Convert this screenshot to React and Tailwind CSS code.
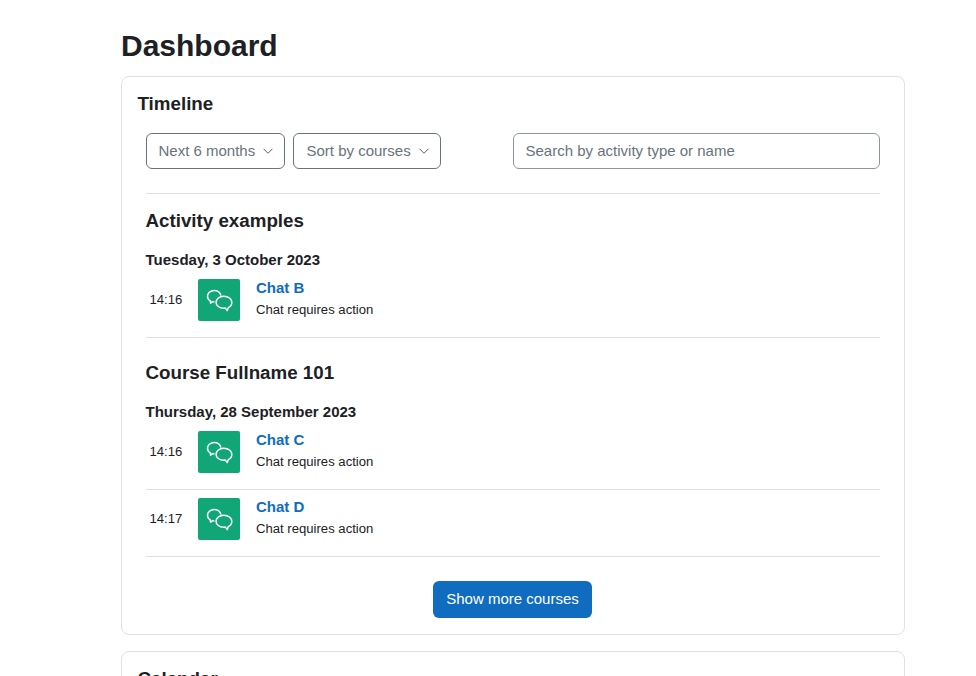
// Two overlapping speech bubbles, same as the chat activity icon
function ChatIcon() {
  return (
    <svg width="42" height="42" viewBox="0 0 42 42" fill="none" stroke="white" strokeWidth="1.5" strokeLinejoin="round">
      <path d="M23 16.6c-.9-3-3.6-5-6.9-5-3.7 0-6.6 2.6-6.6 5.7 0 2 1.1 3.7 2.8 4.7l.3 2.2 2-1.6c.6.2 1.2.3 1.9.3" />
      <path d="M25.8 17.2c4.5 0 8 2.8 8 6.2 0 2.3-1.4 4.2-3.6 5.3l-.9 2.9-2-2.5c-.5.1-1 .1-1.5.1-4.4 0-7.7-2.6-7.7-5.8 0-3.4 3.3-6.2 7.7-6.2z" />
    </svg>
  );
}

function SelectButton({ label, width, labelClass }) {
  return (
    <button className={`flex h-9 items-center justify-between rounded-md border border-[#6a737b] bg-white pl-3 pr-2 text-[15px] text-[#6a737b] ${width}`}>
      <span className={labelClass}>{label}</span>
      <svg width="16" height="12" viewBox="0 0 16 16" fill="none" stroke="#4b5258" strokeWidth="1.2" strokeLinecap="round" strokeLinejoin="round">
        <path d="M2.5 5.5l5.5 5.5 5.5-5.5" />
      </svg>
    </button>
  );
}

function EventRow({ time, name, border }) {
  return (
    <div className={`flex pb-4 ${border ? 'border-b border-[#dee2e6]' : ''}`}>
      <div className="flex w-[52px] items-center pl-1 text-[13.125px] text-[#1d2125]">
        <span className="-ml-[0.5px]">{time}</span>
      </div>
      <div className="flex h-[42px] w-[42px] items-center justify-center rounded-[2px] bg-[#11a676]">
        <ChatIcon />
      </div>
      <div className="ml-4 h-[42px]">
        <div className="-mt-[2px] text-[15px] leading-[22px] font-bold text-[#0f6cbf]">{name}</div>
        <div className="mt-[1px] text-[13.125px] leading-[20px] text-[#1d2125]">Chat requires action</div>
      </div>
    </div>
  );
}

export default function App() {
  return (
    <div className="h-[676px] overflow-hidden bg-white pl-[121px] font-['Liberation_Sans',sans-serif] text-[#1d2125]">
      <div className="w-[784px]">
        <h1 className="pt-[28px] pb-[12px] text-[30px] leading-[36px] font-bold">Dashboard</h1>

        <div className="rounded-lg border border-[#dee2e6] bg-white pb-4">
          <h2 className="pt-[15px] pl-[15.5px] text-[18.75px] leading-[23px] font-bold">Timeline</h2>

          <div className="mx-6 mt-[18px] flex items-center">
            <div className="flex gap-2">
              <SelectButton label="Next 6 months" width="w-[139px]" labelClass="-ml-[0.5px]" />
              <SelectButton label="Sort by courses" width="w-[148px]" labelClass="ml-[0.5px]" />
            </div>
            <div className="ml-auto flex h-9 w-[367px] items-center rounded-md border border-[#8f959e] pl-[11.5px] text-[15px] text-[#6a737b]">
              Search by activity type or name
            </div>
          </div>

          <div className="mx-6 mt-6 border-t border-[#dee2e6] pt-4">
            <h3 className="-ml-[0.5px] text-[18.75px] leading-[22px] font-bold">Activity examples</h3>
            <div className="-ml-[0.5px] mt-[18px] text-[15px] leading-[20px] font-bold">Tuesday, 3 October 2023</div>
            <div className="mt-[9px]">
              <EventRow time="14:16" name="Chat B" border />
            </div>

            <h3 className="-ml-[0.5px] mt-6 text-[18.75px] leading-[22px] font-bold">Course Fullname 101</h3>
            <div className="-ml-[0.5px] mt-[18px] text-[15px] leading-[20px] font-bold">Thursday, 28 September 2023</div>
            <div className="mt-[9px]">
              <EventRow time="14:16" name="Chat C" border />
            </div>
            <div className="mt-[8px]">
              <EventRow time="14:17" name="Chat D" border />
            </div>

            <div className="mt-6 flex justify-center">
              <button className="mr-px h-[37px] w-[159px] rounded-md bg-[#0f6cbf] text-[15px] text-white">Show more courses</button>
            </div>
          </div>
        </div>

        <div className="mt-4 h-[60px] rounded-lg border border-[#dee2e6] bg-white">
          <h2 className="pt-[15px] pl-[15.5px] text-[18.75px] leading-[23px] font-bold">Calendar</h2>
        </div>
      </div>
    </div>
  );
}
